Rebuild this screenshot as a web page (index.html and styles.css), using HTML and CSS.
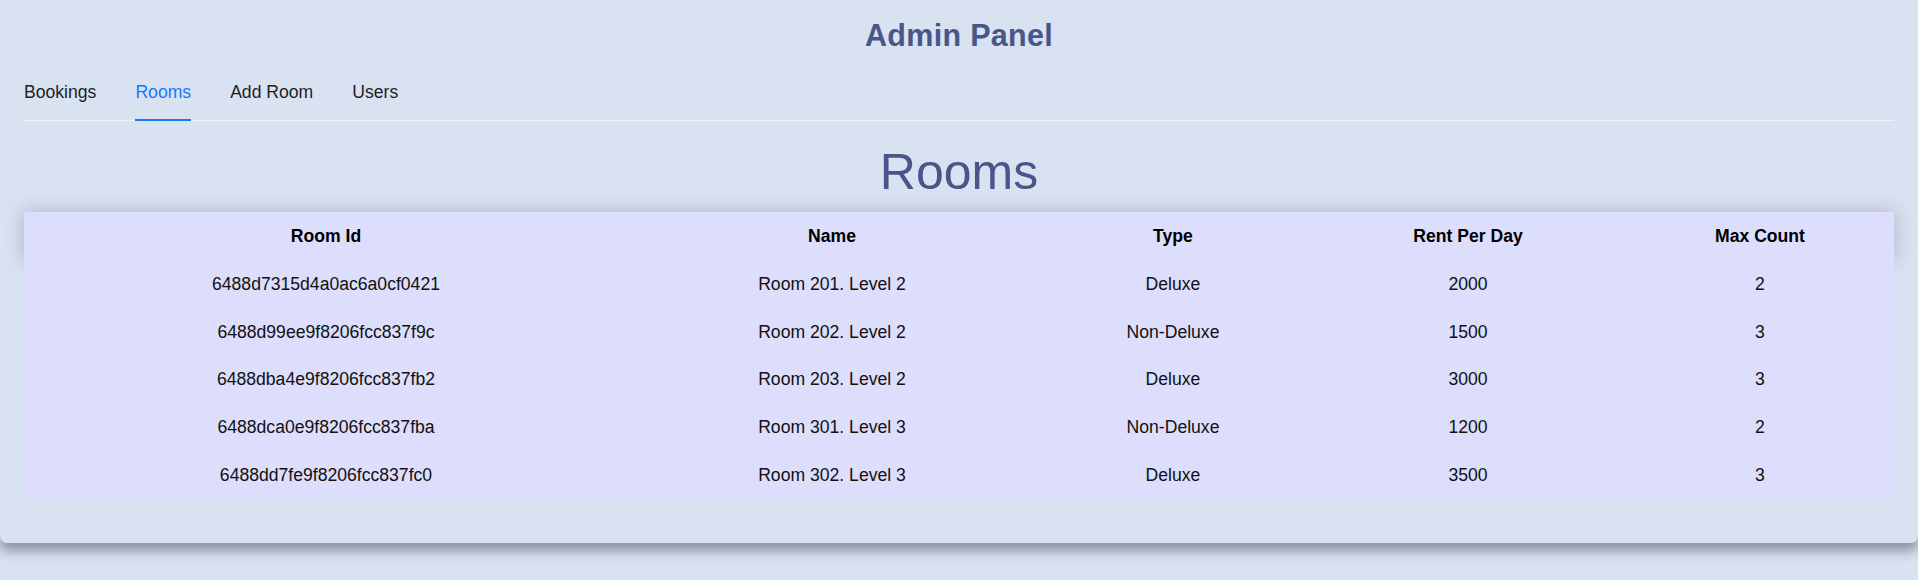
FILE: index.html
```html
<!DOCTYPE html>
<html lang="en">
<head>
<meta charset="utf-8">
<title>Admin Panel</title>
<link rel="stylesheet" href="styles.css">
</head>
<body>
<div class="panel">
  <h1 class="panel-title">Admin Panel</h1>
  <nav class="tab-nav">
    <a class="tab">Bookings</a>
    <a class="tab tab-active">Rooms</a>
    <a class="tab">Add Room</a>
    <a class="tab">Users</a>
  </nav>
  <h2 class="section-title">Rooms</h2>
  <table class="rooms-table">
    <colgroup>
      <col class="col-id">
      <col class="col-name">
      <col class="col-type">
      <col class="col-rent">
      <col class="col-max">
    </colgroup>
    <thead>
      <tr><th>Room Id</th><th>Name</th><th>Type</th><th>Rent Per Day</th><th>Max Count</th></tr>
    </thead>
    <tbody>
      <tr><td>6488d7315d4a0ac6a0cf0421</td><td>Room 201. Level 2</td><td>Deluxe</td><td>2000</td><td>2</td></tr>
      <tr><td>6488d99ee9f8206fcc837f9c</td><td>Room 202. Level 2</td><td>Non-Deluxe</td><td>1500</td><td>3</td></tr>
      <tr><td>6488dba4e9f8206fcc837fb2</td><td>Room 203. Level 2</td><td>Deluxe</td><td>3000</td><td>3</td></tr>
      <tr><td>6488dca0e9f8206fcc837fba</td><td>Room 301. Level 3</td><td>Non-Deluxe</td><td>1200</td><td>2</td></tr>
      <tr><td>6488dd7fe9f8206fcc837fc0</td><td>Room 302. Level 3</td><td>Deluxe</td><td>3500</td><td>3</td></tr>
    </tbody>
  </table>
</div>
</body>
</html>
```

FILE: styles.css
```css
html {
  background: #d9e2f1;
}

body {
  margin: 0;
  min-height: 580px;
  font-family: "Liberation Sans", Arial, sans-serif;
}

.panel {
  position: relative;
  background: #d9e2f1;
  border-radius: 0 0 7px 7px;
  box-shadow: 0 8px 12px rgba(30, 40, 60, 0.42);
  padding: 18px 24px 44px;
}

.panel-title {
  margin: 0;
  font-size: 30.5px;
  line-height: 34px;
  letter-spacing: 0.3px;
  font-weight: bold;
  text-align: center;
  color: #48568a;
}

.tab-nav {
  margin-top: 14px;
  display: flex;
  gap: 39px;
  border-bottom: 1px solid #eef2f8;
}

.tab {
  position: relative;
  padding: 13px 0 15px;
  font-size: 17.6px;
  line-height: 26.4px;
  color: #1f1f1f;
  cursor: pointer;
}

.tab-active {
  color: #1677ff;
}

.tab-active::after {
  content: "";
  position: absolute;
  left: 0;
  right: 0;
  bottom: -1px;
  height: 2px;
  background: #1677ff;
}

.section-title {
  margin: 21px 0 10px;
  font-size: 50px;
  line-height: 60px;
  font-weight: normal;
  text-align: center;
  color: #48568a;
}

.rooms-table {
  width: 100%;
  table-layout: fixed;
  border-collapse: collapse;
  background: #dddefc;
  font-size: 17.6px;
  line-height: 26.4px;
  color: #111;
}

.col-id { width: 604px; }
.col-name { width: 408px; }
.col-type { width: 274px; }
.col-rent { width: 316px; }
.col-max { width: 268px; }

.rooms-table thead tr {
  box-shadow: 0 0 20px rgba(40, 50, 80, 0.26);
}

.rooms-table th,
.rooms-table td {
  padding: 10.7px 8px;
  text-align: center;
  background: #dddefc;
}

.rooms-table th {
  font-weight: bold;
  color: #000;
}
```
